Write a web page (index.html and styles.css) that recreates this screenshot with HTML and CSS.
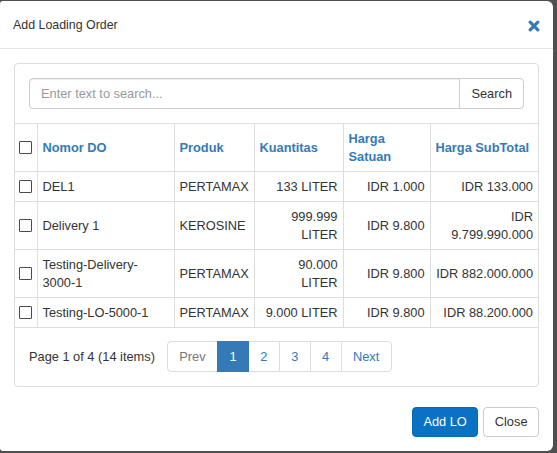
FILE: index.html
```html
<!DOCTYPE html>
<html lang="en">
<head>
<meta charset="utf-8">
<title>Add Loading Order</title>
<link rel="stylesheet" href="styles.css">
</head>
<body>
<div class="modal">
  <div class="modal-header">
    <h4 class="modal-title">Add Loading Order</h4>
    <button class="close" type="button" aria-label="Close">
      <svg width="12" height="12" viewBox="0 0 12 12"><path d="M2.2 2.2L9.8 9.8M9.8 2.2L2.2 9.8" stroke="#337ab7" stroke-width="3.2" stroke-linecap="round" fill="none"/></svg>
    </button>
  </div>
  <div class="modal-body">
    <div class="panel">
      <div class="search">
        <input type="text" placeholder="Enter text to search...">
        <button type="button">Search</button>
      </div>
      <table>
        <colgroup>
          <col class="c1"><col class="c2"><col class="c3"><col class="c4"><col class="c5"><col class="c6">
        </colgroup>
        <thead>
          <tr>
            <th class="chk"><input type="checkbox"></th>
            <th>Nomor DO</th>
            <th>Produk</th>
            <th>Kuantitas</th>
            <th>Harga Satuan</th>
            <th>Harga SubTotal</th>
          </tr>
        </thead>
        <tbody>
          <tr>
            <td class="chk"><input type="checkbox"></td>
            <td>DEL1</td>
            <td>PERTAMAX</td>
            <td class="num">133 LITER</td>
            <td class="num">IDR 1.000</td>
            <td class="num">IDR 133.000</td>
          </tr>
          <tr>
            <td class="chk"><input type="checkbox"></td>
            <td>Delivery 1</td>
            <td>KEROSINE</td>
            <td class="num">999.999 LITER</td>
            <td class="num">IDR 9.800</td>
            <td class="num">IDR 9.799.990.000</td>
          </tr>
          <tr>
            <td class="chk"><input type="checkbox"></td>
            <td>Testing-Delivery-3000-1</td>
            <td>PERTAMAX</td>
            <td class="num">90.000 LITER</td>
            <td class="num">IDR 9.800</td>
            <td class="num nowrap">IDR 882.000.000</td>
          </tr>
          <tr>
            <td class="chk"><input type="checkbox"></td>
            <td>Testing-LO-5000-1</td>
            <td>PERTAMAX</td>
            <td class="num nowrap">9.000 LITER</td>
            <td class="num">IDR 9.800</td>
            <td class="num">IDR 88.200.000</td>
          </tr>
        </tbody>
      </table>
      <div class="pager">
        <span class="pager-info">Page 1 of 4 (14 items)</span>
        <ul class="pagination">
          <li class="disabled"><a href="#">Prev</a></li>
          <li class="active"><a href="#">1</a></li>
          <li><a href="#">2</a></li>
          <li><a href="#">3</a></li>
          <li><a href="#">4</a></li>
          <li><a href="#">Next</a></li>
        </ul>
      </div>
    </div>
  </div>
  <div class="modal-footer">
    <button class="btn btn-primary" type="button">Add LO</button>
    <button class="btn" type="button">Close</button>
  </div>
</div>
</body>
</html>
```

FILE: styles.css
```css
html, body {
  height: 100%;
}
body {
  margin: 0;
  padding-top: 1px;
  box-sizing: border-box;
  background: #4f4f4f;
  font-family: "Liberation Sans", Arial, sans-serif;
  font-size: 12.8px;
  line-height: 18px;
  color: #333;
  overflow: hidden;
}
.modal {
  width: 553px;
  background: #fff;
  border-radius: 3px 6px 6px 3px;
}
.modal-header {
  display: flex;
  justify-content: space-between;
  align-items: center;
  padding: 15px 14px 14px 13px;
  border-bottom: 1px solid #e5e5e5;
}
.modal-title {
  margin: 0;
  font-size: 12.4px;
  font-weight: normal;
  line-height: 18px;
  color: #333;
}
.close {
  border: 0;
  background: none;
  padding: 0;
  margin: 1px -1px 0 0;
  width: 12px;
  height: 12px;
  display: flex;
  cursor: pointer;
}
.modal-body {
  padding: 14px 14px 0;
}
.panel {
  border: 1px solid #ddd;
  border-radius: 4px;
}
.search {
  display: flex;
  padding: 14px;
}
.search input {
  flex: 1;
  min-width: 0;
  height: 31px;
  box-sizing: border-box;
  border: 1px solid #ccc;
  border-radius: 4px 0 0 4px;
  padding: 0 11px;
  font: inherit;
  color: #555;
  box-shadow: inset 0 1px 1px rgba(0, 0, 0, .075);
  outline: none;
}
.search input::placeholder {
  color: #999;
}
.search button {
  height: 31px;
  box-sizing: border-box;
  border: 1px solid #ccc;
  border-radius: 0 4px 4px 0;
  margin-left: -1px;
  background: #fff;
  padding: 0 11px;
  font: inherit;
  color: #333;
}
table {
  width: 100%;
  border-collapse: collapse;
  table-layout: fixed;
}
.c1 { width: 22px; }
.c2 { width: 137px; }
.c3 { width: 80px; }
.c4 { width: 89px; }
.c5 { width: 87px; }
th, td {
  border: 1px solid #ddd;
  padding: 5.5px 5px;
  vertical-align: middle;
  text-align: left;
}
tr > :first-child { border-left: 0; }
tr > :last-child { border-right: 0; }
th {
  color: #337ab7;
  font-weight: bold;
}
.num { text-align: right; }
.nowrap { white-space: nowrap; }
.chk {
  padding: 0 0 0 4px;
}
.chk input {
  -webkit-appearance: none;
  appearance: none;
  display: block;
  width: 13px;
  height: 13px;
  margin: 0;
  box-sizing: border-box;
  border: 1px solid #4a4a4a;
  border-radius: 1px;
  background: #fff;
}
.pager {
  display: flex;
  align-items: center;
  gap: 12px;
  padding: 13px 14px 14px;
}
.pagination {
  display: flex;
  list-style: none;
  margin: 0;
  padding: 0;
}
.pagination a {
  display: block;
  padding: 5.5px 11.4px;
  border: 1px solid #ddd;
  margin-left: -1px;
  color: #337ab7;
  text-decoration: none;
  line-height: 18px;
  background: #fff;
}
.pagination li:first-child a {
  margin-left: 0;
  border-radius: 4px 0 0 4px;
}
.pagination li:last-child a {
  border-radius: 0 4px 4px 0;
}
.pagination .active a {
  background: #337ab7;
  border-color: #337ab7;
  color: #fff;
  position: relative;
}
.pagination .disabled a {
  color: #777;
}
.modal-footer {
  display: flex;
  justify-content: flex-end;
  gap: 5px;
  padding: 20px 14px 14px;
}
.btn {
  font: inherit;
  line-height: 18px;
  padding: 5px 10.5px;
  border: 1px solid #ccc;
  border-radius: 4px;
  background: #fff;
  color: #333;
}
.btn-primary {
  background: #0a72c2;
  border-color: #0868b3;
  color: #fff;
}
```
